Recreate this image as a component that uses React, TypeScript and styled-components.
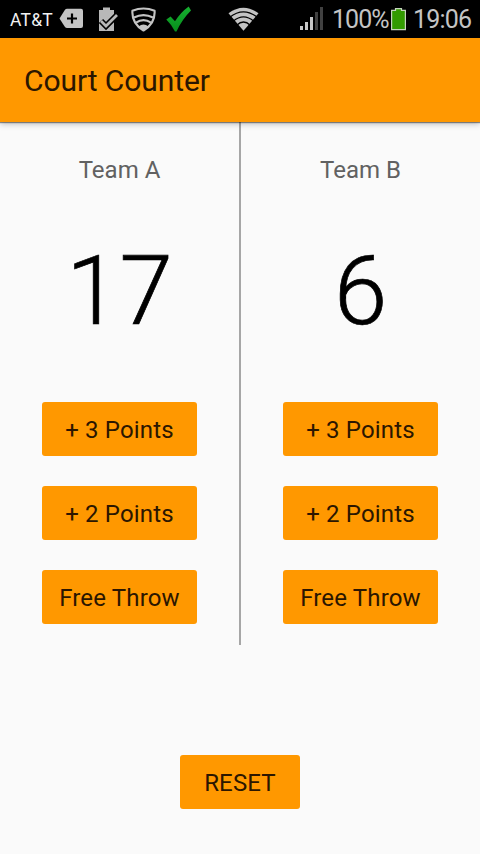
import React, { useState } from "react";
import styled, { createGlobalStyle } from "styled-components";

const GlobalStyle = createGlobalStyle`
  * { box-sizing: border-box; }
  body { margin: 0; background: #fafafa; font-family: Roboto, "Liberation Sans", sans-serif; }
`;

const Screen = styled.div`
  display: flex;
  flex-direction: column;
  width: 480px;
  height: 854px;
  background: #fafafa;
  overflow: hidden;
`;

const StatusBar = styled.header`
  display: flex;
  flex: none;
  align-items: center;
  height: 38px;
  background: #000;
  color: #c4c4c4;
  white-space: nowrap;

  svg { display: block; flex: none; }
`;

const Carrier = styled.span`
  width: 48px;
  margin-left: 10px;
  padding-top: 2px;
  font-size: 17.5px;
  line-height: 24px;
  letter-spacing: 0.2px;
  color: #f2f2f2;
`;

const StatusText = styled.span<{ $width: number; $spacing: number }>`
  width: ${(p) => p.$width}px;
  font-size: 25px;
  line-height: 38px;
  padding-top: 2px;
  letter-spacing: ${(p) => p.$spacing}px;
`;

const Gap = styled.span<{ $size: number }>`
  flex: 0 0 ${(p) => p.$size}px;
`;

const AppBar = styled.div`
  display: flex;
  flex: none;
  align-items: center;
  height: 84px;
  padding: 2px 24px 0;
  background: #ff9800;
  box-shadow: 0 1px 1px rgba(0, 0, 0, 0.42), 0 2px 6px rgba(0, 0, 0, 0.25);
  z-index: 1;
`;

const Title = styled.h1`
  margin: 0;
  font-size: 30px;
  font-weight: 400;
  line-height: 40px;
  letter-spacing: -0.08px;
  color: #2b1600;
`;

const Board = styled.main`
  display: grid;
  flex: none;
  grid-template-columns: 239px 2px 239px;
  height: 523px;
`;

const Divider = styled.div`
  background: #a6a6a6;
`;

const Team = styled.section`
  display: flex;
  flex-direction: column;
  align-items: center;
`;

const TeamName = styled.h2`
  margin: 33px 0 0;
  font-size: 24px;
  font-weight: 400;
  line-height: 30px;
  color: #616161;
`;

const Score = styled.div`
  height: 120px;
  margin-top: 46px;
  font-size: 96px;
  font-weight: 300;
  line-height: 120px;
  color: #000;
  -webkit-text-stroke: 0.7px #000;
`;

const Actions = styled.div`
  display: flex;
  flex-direction: column;
  gap: 30px;
  margin-top: 51px;
`;

const Button = styled.button<{ $width: number }>`
  width: ${(p) => p.$width}px;
  height: 54px;
  padding: 2px 0 0;
  border: 0;
  border-radius: 3px;
  background: #ff9800;
  font: 400 24px/30px Roboto, "Liberation Sans", sans-serif;
  letter-spacing: 0.17px;
  color: #2b1600;
  white-space: nowrap;
`;

const Footer = styled.footer`
  display: flex;
  justify-content: center;
  padding-top: 110px;
`;

const AddTagIcon = () => (
  <svg width="24" height="22" viewBox="0 0 24 22">
    <path d="M.5 10.5 5.8 2Q6.6.8 8.2 .8H22Q24 .8 24 2.8V18Q24 20 22 20H8.2Q6.6 20 5.8 18.8Z" fill="#c4c4c4" />
    <path d="M13 5.5V15.5M8 10.5H18" stroke="#000" strokeWidth="2.2" />
  </svg>
);

const BatteryCheckIcon = () => (
  <svg width="21" height="25" viewBox="0 0 21 25">
    <path d="M1 3H5V.5H12V3H16V24H1Z" fill="#b8b8b8" />
    <path d="M3 14 8 19 19 8" fill="none" stroke="#000" strokeWidth="6" />
    <path d="M3 14 8 19 19 8" fill="none" stroke="#b8b8b8" strokeWidth="2.8" />
  </svg>
);

const ShieldIcon = () => (
  <svg width="25" height="25" viewBox="0 0 25 25" fill="none" stroke="#c4c4c4" strokeWidth="2.1">
    <path d="M1.4 3.8Q12.5-.8 23.6 3.8Q24.4 16.5 12.5 23.5Q.6 16.5 1.4 3.8Z" strokeLinejoin="round" />
    <path d="M3 10.5Q12.5 5.7 22 10.5M5 15.7Q12.5 10.5 20 15.7" />
    <path d="M7.5 19.5Q12.5 15.3 17.5 19.5L12.5 23.5Z" fill="#c4c4c4" stroke="none" />
  </svg>
);

const CheckIcon = () => (
  <svg width="27" height="27" viewBox="0 0 27 27">
    <defs>
      <linearGradient id="check" x1="0" y1="0" x2="0" y2="1">
        <stop stopColor="#16b030" />
        <stop offset="1" stopColor="#078d1c" />
      </linearGradient>
    </defs>
    <path d="M.3 13.5 4.6 10.6 9 15.2Q14.5 6.5 22.7.5L25 4.6Q16 13.5 10.5 25.6H9Q5.5 18.5.3 13.5Z" fill="url(#check)" />
  </svg>
);

const WifiIcon = () => (
  <svg width="31" height="24" viewBox="0 0 31 24">
    <path d="M.5 6.3Q15.5-4.8 30.5 6.3L15.5 23.7Z" fill="#c4c4c4" />
    <path d="M1.5 10.4Q15.5-.6 29.5 10.4M5.2 14.2Q15.5 5.5 25.8 14.2M8.8 18.2Q15.5 11.9 22.2 18.2" fill="none" stroke="#000" strokeWidth="1.3" />
  </svg>
);

const SignalIcon = () => (
  <svg width="24" height="24" viewBox="0 0 24 24">
    <path d="M0 19H3V23H0ZM5 15H8V23H5ZM10 10H13V23H10Z" fill="#c8c8c8" />
    <path d="M15 5H18V23H15ZM20 0H23V23H20Z" fill="#414141" />
  </svg>
);

const BatteryIcon = () => (
  <svg width="15" height="23" viewBox="0 0 15 23">
    <path d="M.6 2.4H4.5V.6H10.5V2.4H14.4V21.6H.6Z" fill="#329b00" stroke="#c5d4bd" strokeWidth="1.2" />
  </svg>
);

interface TeamPanelProps {
  name: string;
  score: number;
  onAdd: (points: number) => void;
}

const TeamPanel = ({ name, score, onAdd }: TeamPanelProps) => (
  <Team>
    <TeamName>{name}</TeamName>
    <Score>{score}</Score>
    <Actions>
      <Button $width={155} onClick={() => onAdd(3)}>+ 3 Points</Button>
      <Button $width={155} onClick={() => onAdd(2)}>+ 2 Points</Button>
      <Button $width={155} onClick={() => onAdd(1)}>Free Throw</Button>
    </Actions>
  </Team>
);

export default function App() {
  const [scoreA, setScoreA] = useState(17);
  const [scoreB, setScoreB] = useState(6);

  const reset = () => {
    setScoreA(0);
    setScoreB(0);
  };

  return (
    <>
      <GlobalStyle />
      <Screen>
        <StatusBar>
          <Carrier>AT&amp;T</Carrier>
          <Gap $size={1} />
          <AddTagIcon />
          <Gap $size={15} />
          <BatteryCheckIcon />
          <Gap $size={12} />
          <ShieldIcon />
          <Gap $size={10} />
          <CheckIcon />
          <Gap $size={35} />
          <WifiIcon />
          <Gap $size={41} />
          <SignalIcon />
          <Gap $size={8} />
          <StatusText $width={59} $spacing={-0.95}>100%</StatusText>
          <BatteryIcon />
          <Gap $size={7} />
          <StatusText $width={60} $spacing={-0.8}>19:06</StatusText>
        </StatusBar>
        <AppBar>
          <Title>Court Counter</Title>
        </AppBar>
        <Board>
          <TeamPanel name="Team A" score={scoreA} onAdd={(n) => setScoreA(scoreA + n)} />
          <Divider />
          <TeamPanel name="Team B" score={scoreB} onAdd={(n) => setScoreB(scoreB + n)} />
        </Board>
        <Footer>
          <Button $width={120} onClick={reset}>RESET</Button>
        </Footer>
      </Screen>
    </>
  );
}
